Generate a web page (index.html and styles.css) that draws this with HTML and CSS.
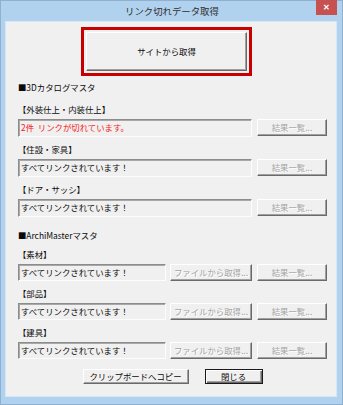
FILE: index.html
```html
<!DOCTYPE html>
<html lang="ja">
<head>
  <meta charset="UTF-8">
  <title>リンク切れデータ取得</title>
  <link rel="stylesheet" href="styles.css">
</head>
<body>
  <div class="window">
    <div class="titlebar">
      <span class="title">リンク切れデータ取得</span>
      <button class="close">✕</button>
    </div>

    <div class="client">
      <div class="fetch-wrap">
        <div class="highlight">
          <button class="btn big">サイトから取得</button>
        </div>
      </div>

      <div class="section-title">■3Dカタログマスタ</div>

      <div class="group">
        <div class="label">【外装仕上・内装仕上】</div>
        <div class="row">
          <div class="field error">2件&nbsp;&nbsp;リンクが切れています。</div>
          <button class="btn small" disabled>結果一覧...</button>
        </div>
      </div>

      <div class="group">
        <div class="label">【住設・家具】</div>
        <div class="row">
          <div class="field">すべてリンクされています！</div>
          <button class="btn small" disabled>結果一覧...</button>
        </div>
      </div>

      <div class="group">
        <div class="label">【ドア・サッシ】</div>
        <div class="row">
          <div class="field">すべてリンクされています！</div>
          <button class="btn small" disabled>結果一覧...</button>
        </div>
      </div>

      <div class="section-title second">■ArchiMasterマスタ</div>

      <div class="group archi">
        <div class="label">【素材】</div>
        <div class="row">
          <div class="field">すべてリンクされています！</div>
          <button class="btn file" disabled>ファイルから取得...</button>
          <button class="btn small" disabled>結果一覧...</button>
        </div>
      </div>

      <div class="group archi">
        <div class="label">【部品】</div>
        <div class="row">
          <div class="field">すべてリンクされています！</div>
          <button class="btn file" disabled>ファイルから取得...</button>
          <button class="btn small" disabled>結果一覧...</button>
        </div>
      </div>

      <div class="group archi">
        <div class="label">【建具】</div>
        <div class="row">
          <div class="field">すべてリンクされています！</div>
          <button class="btn file" disabled>ファイルから取得...</button>
          <button class="btn small" disabled>結果一覧...</button>
        </div>
      </div>

      <div class="footer">
        <button class="btn copy">クリップボードへコピー</button>
        <button class="btn close-btn">閉じる</button>
      </div>
    </div>
  </div>
</body>
</html>
```

FILE: styles.css
```css
/* Dialog window */
body {
  margin: 0;
  font-family: "Noto Sans CJK JP", "Noto Sans", sans-serif;
  font-size: 8.4px;
  color: #0a0a0a;
}

.window {
  position: relative;
  box-sizing: border-box;
  width: 343px;
  height: 405px;
  display: flex;
  flex-direction: column;
  padding: 0 5px 7px 4px;
  background: #b1d2ee;
  border: 1px solid #8fb0cf;
}

.titlebar {
  height: 20px;
  display: flex;
  align-items: center;
  justify-content: center;
}

.title {
  font-size: 9.4px;
  color: #2e2e2e;
  margin-left: 2px;
}

.close {
  position: absolute;
  top: -1px;
  right: 5px;
  width: 21px;
  height: 15px;
  padding: 0;
  border: none;
  background: #c75050;
  color: #fff;
  font-size: 8px;
  font-weight: bold;
  line-height: 15px;
}

.client {
  flex: 1;
  background: #f0f0f0;
  border: 1px solid #d7e7f5;
  padding: 0 9px 0 12px;
}

/* Buttons */
.btn {
  box-sizing: border-box;
  font-family: inherit;
  font-size: 8.4px;
  color: #0a0a0a;
  background: #f0f0f0;
  border: 1px solid;
  border-color: #ffffff #6a6a6a #6a6a6a #ffffff;
  box-shadow: inset -1px -1px #a0a0a0;
  padding: 0;
  line-height: 1;
}

.btn:disabled {
  color: #a3a3a3;
  text-shadow: 1px 1px #fff;
}

.fetch-wrap {
  margin: 5px 0 0 63px;
}

.highlight {
  width: 171px;
  height: 49px;
  box-sizing: border-box;
  border: 3px solid #c80000;
  padding: 2px;
}

.big {
  width: 100%;
  height: 100%;
}

/* Sections */
.section-title {
  margin-top: 3px;
  margin-bottom: 6px;
  line-height: 16px;
}

.section-title.second {
  margin-top: 10px;
  margin-bottom: 3px;
}

.group {
  margin-bottom: 4px;
}

.label {
  line-height: 16px;
}

.row {
  display: flex;
  align-items: flex-start;
  gap: 4px;
  margin-top: 2px;
}

.field {
  flex: 1;
  box-sizing: border-box;
  height: 18px;
  padding: 1px 2px;
  line-height: 12px;
  border: 1px solid;
  border-color: #8c8c8c #fdfdfd #fdfdfd #8c8c8c;
  box-shadow: inset 1px 1px #a8a8a8;
}

.field.error {
  color: #f42020;
}

.archi .field {
  height: 17px;
}

.small {
  width: 70px;
  height: 17px;
  margin-left: 1px;
}

.file {
  width: 82px;
  height: 17px;
}

.footer {
  display: flex;
  justify-content: center;
  gap: 16px;
  margin-top: 10px;
}

.copy {
  width: 106px;
  height: 15px;
}

.close-btn {
  width: 58px;
  height: 15px;
  border-color: #1a1a1a;
  box-shadow: inset 1px 1px #fff, inset -1px -1px #6a6a6a, inset -2px -2px #a0a0a0;
}
```
